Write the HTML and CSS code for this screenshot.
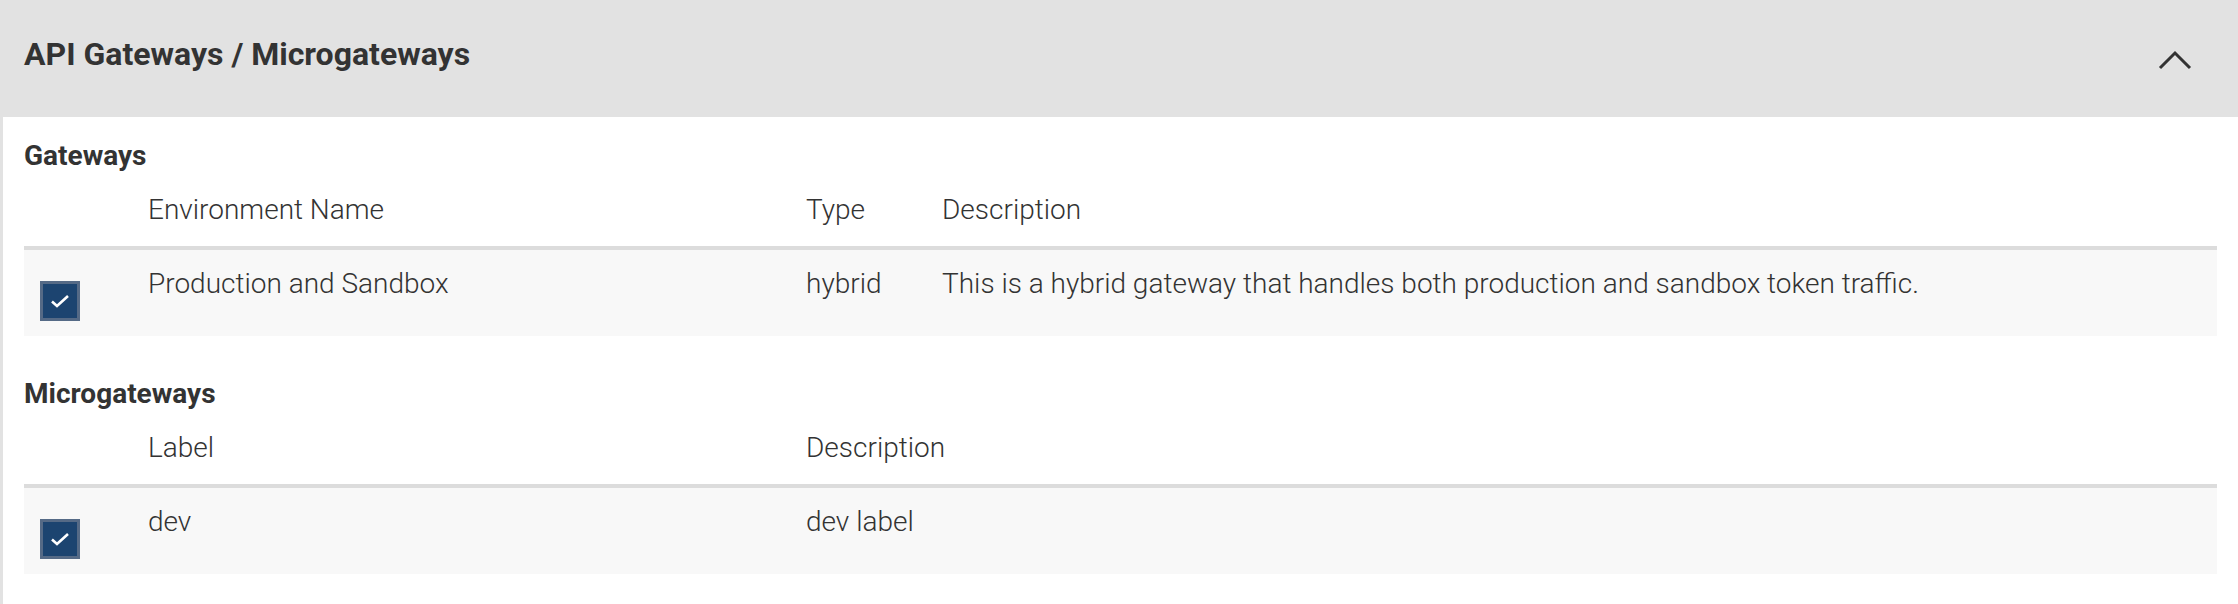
FILE: index.html
```
<!DOCTYPE html>
<html>
<head>
<meta charset="utf-8">
<link rel="stylesheet" href="styles.css">
</head>
<body>
<div class="panel">
  <div class="panel-header">
    <h1 class="panel-title">API Gateways / Microgateways</h1>
    <svg class="chevron" width="36" height="20" viewBox="0 0 36 20"><path d="M3 18 L18 3 L33 18" fill="none" stroke="#333" stroke-width="3"/></svg>
  </div>
  <div class="panel-body">
    <h2 class="section-title">Gateways</h2>
    <div class="table gw">
      <div class="cell head"></div>
      <div class="cell head">Environment Name</div>
      <div class="cell head">Type</div>
      <div class="cell head">Description</div>
      <div class="cell row check-cell"><span class="checkbox"><svg width="20" height="15" viewBox="0 0 20 15"><path d="M2 7.5 L7 12 L18 2" fill="none" stroke="#fff" stroke-width="2.6"/></svg></span></div>
      <div class="cell row">Production and Sandbox</div>
      <div class="cell row">hybrid</div>
      <div class="cell row">This is a hybrid gateway that handles both production and sandbox token traffic.</div>
    </div>
    <h2 class="section-title second">Microgateways</h2>
    <div class="table mgw">
      <div class="cell head"></div>
      <div class="cell head">Label</div>
      <div class="cell head">Description</div>
      <div class="cell row check-cell"><span class="checkbox"><svg width="20" height="15" viewBox="0 0 20 15"><path d="M2 7.5 L7 12 L18 2" fill="none" stroke="#fff" stroke-width="2.6"/></svg></span></div>
      <div class="cell row">dev</div>
      <div class="cell row">dev label</div>
    </div>
  </div>
</div>
</body>
</html>
```
FILE: styles.css
```
html, body {
  margin: 0;
  padding: 0;
  background: #ffffff;
}
body {
  font-family: Roboto, "Liberation Sans", sans-serif;
  color: #333333;
  width: 2238px;
  height: 604px;
  overflow: hidden;
}
.panel {
  display: flex;
  flex-direction: column;
}
.panel-header {
  height: 117px;
  background: #e2e2e2;
  display: flex;
  align-items: center;
  justify-content: space-between;
  padding: 0 45px 0 24px;
}
.panel-title {
  margin: 0 0 10px 0;
  font-size: 32px;
  font-weight: 700;
  color: #333333;
}
.chevron {
  display: block;
  margin-top: 2px;
}
.panel-body {
  border-left: 3px solid #e2e2e2;
  padding: 21px 21px 31px 21px;
}
.section-title {
  margin: 0;
  font-size: 28px;
  line-height: 36px;
  font-weight: 700;
  color: #333333;
}
.section-title.second {
  margin-top: 40px;
}
.table {
  display: grid;
  margin-top: 15px;
  font-size: 28px;
  font-weight: 300;
  line-height: 42px;
}
.table.gw {
  grid-template-columns: 124px 658px 136px 1fr;
}
.table.mgw {
  grid-template-columns: 124px 658px 1fr;
}
.cell.head {
  padding-bottom: 15px;
  border-bottom: 4px solid #dcdcdc;
}
.cell.row {
  background: #f8f8f8;
  padding-top: 13px;
  padding-bottom: 31px;
}
.cell.check-cell {
  padding: 31px 0 15px 16px;
}
.checkbox {
  display: flex;
  align-items: center;
  justify-content: center;
  width: 40px;
  height: 40px;
  box-sizing: border-box;
  background: #1c4470;
  border: 3px solid #556a86;
}
```
